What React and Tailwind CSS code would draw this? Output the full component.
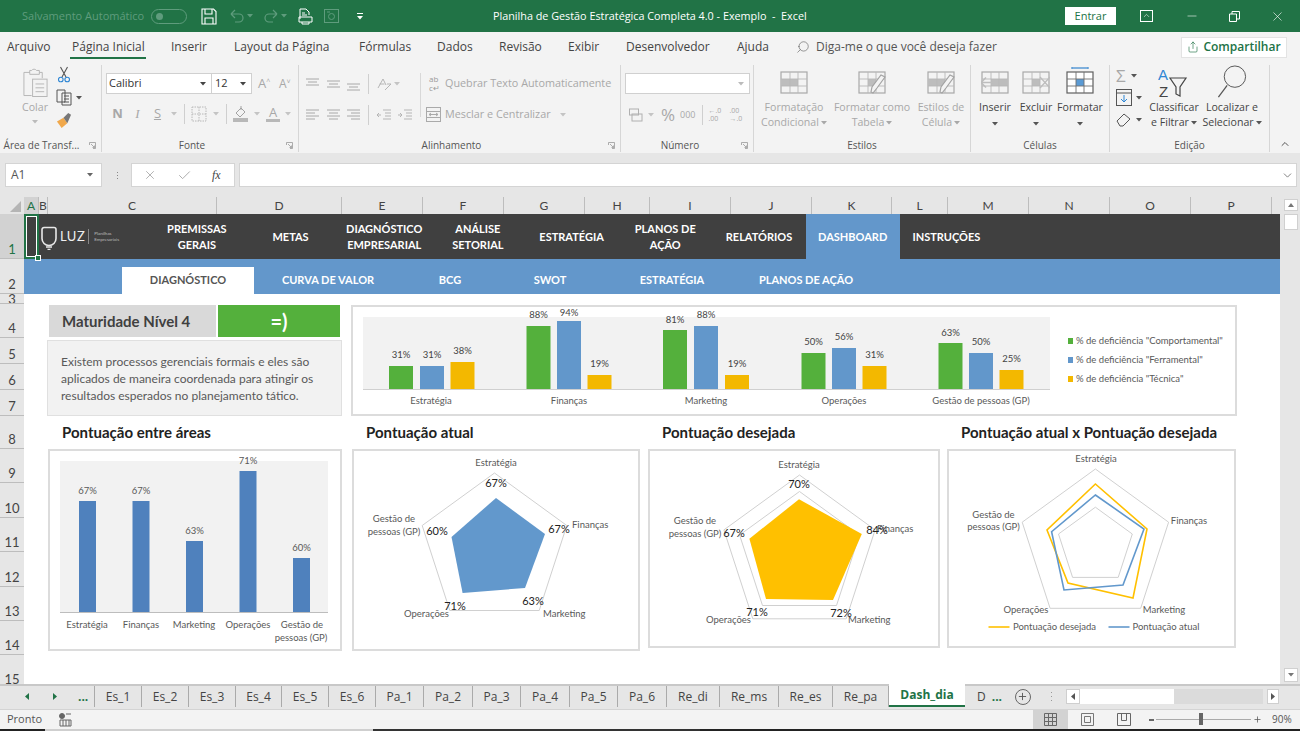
import React from "react";
import { Search, Share, X, Check, Minus, Plus, ChevronUp, ChevronDown } from "lucide-react";

const G = "#a8a8a8";
const Caret = ({ c = "#7a7a7a", className = "" }) => (
  <svg width="6" height="4" viewBox="0 0 6 4" className={className}><path d="M0 0h6L3 3.6z" fill={c} /></svg>
);

const Save = () => (
  <svg width="16" height="17" viewBox="0 0 16 17" fill="none" stroke="#fff" strokeWidth="1.1"><path d="M1 1h11.5L15 3.5V16H1z" /><path d="M4 1v5h7V1M4 16v-6h8v6" /></svg>
);
const Undo = ({ flip }) => (
  <svg width="14" height="14" viewBox="0 0 14 14" fill="none" stroke="#5f9c7d" strokeWidth="1.2" className={flip ? "-scale-x-100" : ""}><path d="M1 5h8a4 4 0 0 1 0 8H5M1 5l4-4M1 5l4 4" /></svg>
);
const Preview = () => (
  <svg width="15" height="17" viewBox="0 0 15 17" fill="none" stroke="#fff" strokeWidth="1"><path d="M2 11V1h6l3 3v3" /><path d="M4 5h3M4 7h5" /><path d="M1 9h13v5H1zM4 14v2h7v-2" /></svg>
);
const Camera = () => (
  <svg width="15" height="14" viewBox="0 0 15 14" fill="none" stroke="#5f9c7d" strokeWidth="1"><rect x="0.5" y="0.5" width="14" height="13" /><circle cx="7.5" cy="7.5" r="3" /><path d="M3 3h3" /></svg>
);
const Lines = ({ rows }) => (
  <svg width="17" height="16" viewBox="0 0 17 16" stroke={G} strokeWidth="1" fill="none">
    {rows.map((r, i) => <path key={i} d={`M${r[0]} ${r[2]}H${r[1]}`} />)}
  </svg>
);
const Grid = ({ hi, brush, arrow, del, top }) => (
  <svg width="28" height="32" viewBox="0 0 28 32" fill="none">
    {top && <path d="M6 2h16M6 1v2M22 1v2" stroke="#5b9bd5" strokeWidth="1.4" />}
    <rect x="1" y="6" width="26" height="21" fill={top ? "#fff" : "#f3f3f3"} stroke={top ? "#5f5f5f" : "#a9a9a9"} strokeWidth="1.2" />
    {hi && <rect x={hi[0]} y={hi[1]} width={hi[2]} height={hi[3]} fill={top ? "#5b9bd5" : "#bdbdbd"} />}
    <path d="M1 13h26M1 20h26M10 6v21M18 6v21" stroke={top ? "#6f6f6f" : "#b8b8b8"} strokeWidth="0.9" />
    {arrow && <path d="M0 16.5h12M0 16.5l5-5M0 16.5l5 5" stroke="#bdbdbd" strokeWidth="1.6" />}
    {del && <path d="M18 11l10 11M28 11L18 22" stroke="#bdbdbd" strokeWidth="1.3" />}
    {brush && <path d="M27 11l-8 11-4 5-2-1 1-5 9-12z" fill="#f3f3f3" stroke="#a3a3a3" strokeWidth="1.2" />}
  </svg>
);

const menu = [["Arquivo", "w-[65px]"], ["Página Inicial", "w-[99px]"], ["Inserir", "w-[63px]"], ["Layout da Página", "w-[125px]"], ["Fórmulas", "w-[78px]"], ["Dados", "w-[62px]"], ["Revisão", "w-[69px]"], ["Exibir", "w-[58px]"], ["Desenvolvedor", "w-[111px]"], ["Ajuda", "w-[59px]"]];

function TitleBar() {
  return (
    <div className="flex h-8 items-center bg-[#217346] text-[11px] text-white">
      <div className="flex w-[493px] items-center pl-[22px]">
        <span className="w-[129px] text-[#5f9c7d]">Salvamento Automático</span>
        <div className="flex h-[15px] w-9 items-center rounded-full border border-[#5f9c7d] pl-[4px]"><div className="h-[7px] w-[7px] rounded-full bg-[#5f9c7d]" /></div>
        <div className="ml-[14px]"><Save /></div>
        <div className="ml-[13px] flex items-center gap-[3px]"><Undo /><Caret c="#5f9c7d" /></div>
        <div className="ml-[11px] flex items-center gap-[3px]"><Undo flip /><Caret c="#5f9c7d" /></div>
        <div className="ml-[11px]"><Preview /></div>
        <div className="ml-[11px]"><Camera /></div>
        <div className="ml-[18px] flex flex-col items-center gap-[2px]"><div className="h-px w-[6px] bg-white" /><Caret c="#fff" /></div>
      </div>
      <span className="whitespace-pre text-[10.8px]">Planilha de Gestão Estratégica Completa 4.0 - Exemplo  -  Excel</span>
      <div className="ml-auto flex items-center text-white">
        <div className="flex h-[18px] w-[51px] items-center justify-center bg-white text-[#217346]">Entrar</div>
        <div className="ml-[24px] flex h-[12px] w-[13px] items-start justify-center border border-white"><ChevronUp size={9} strokeWidth={1.5} /></div>
        <Minus size={14} strokeWidth={1} className="ml-[32px]" />
        <svg width="11" height="11" viewBox="0 0 11 11" fill="none" stroke="#fff" className="ml-[30px]"><path d="M0.5 3h7v7.5h-7zM3 3V0.5h7.5V8H8" /></svg>
        <X size={15} strokeWidth={1} className="ml-[30px] mr-[15px]" />
      </div>
    </div>
  );
}

function Tabs() {
  return (
    <div className="flex h-[30px] items-center bg-[#f3f3f3] pl-[7px] text-[12px] text-[#444]">
      {menu.map(([t, w]) => (
        <div key={t} className={`relative flex h-full items-center ${w}`}>
          {t}
          {t === "Página Inicial" && <div className="absolute left-[-2px] top-[25px] h-[2px] w-[76px] bg-[#217346]" />}
        </div>
      ))}
      <Search size={14} strokeWidth={1} className="-scale-x-100 text-[#555]" />
      <span className="ml-[6px] w-[365px] text-[#555]">Diga-me o que você deseja fazer</span>
      <div className="flex h-[21px] w-[106px] items-center justify-center gap-[4px] border border-[#e3e3e3] bg-white font-semibold text-[#217346]">
        <Share size={12} strokeWidth={1.3} />Compartilhar
      </div>
    </div>
  );
}

const Group = ({ w, label, launcher, pad = "", children }) => (
  <div className={`mb-[1px] mt-[3px] flex shrink-0 flex-col ${w} border-r border-[#d6d6d6]`}>
    <div className="relative flex-1">{children}</div>
    <div className={`relative h-[14px] ${pad} text-center text-[10px] leading-[14px] text-[#555]`}>
      {label}
      {launcher && <svg width="7" height="7" viewBox="0 0 7 7" fill="none" stroke="#999" strokeWidth="0.8" className="absolute right-[5px] top-[4px]"><path d="M0.5 3V0.5H6.5V6.5H4M2 2l3.5 3.5M5.5 3.5v2h-2" /></svg>}
    </div>
  </div>
);

const SmallBtn = ({ children, w = "" }) => <div className={`flex items-center justify-center ${w}`}>{children}</div>;
const V = ({ m = "mx-[4px]" }) => <div className={`${m} h-[20px] w-px bg-[#cfcfcf]`} />;
const L = { top: [[2, 15, 3], [4, 13, 6], [2, 15, 9]], mid: [[2, 15, 5], [4, 13, 8], [2, 15, 11]], bot: [[2, 15, 8], [4, 13, 11], [2, 15, 14]], left: [[2, 15, 3], [2, 11, 6], [2, 15, 9], [2, 11, 12]], center: [[2, 15, 3], [4, 13, 6], [2, 15, 9], [4, 13, 12]], right: [[2, 15, 3], [6, 15, 6], [2, 15, 9], [6, 15, 12]] };

const BigBtn = ({ icon, a, b, w, dark, caret }) => (
  <div className={`flex shrink-0 flex-col items-center ${w} ${dark ? "text-[#444]" : "text-[#a8a8a8]"}`}>
    <div className="flex h-[33px] items-end">{icon}</div>
    <div className="mt-[2px] h-[15px] whitespace-nowrap text-[10.6px] leading-[15px]">{a}</div>
    <div className="flex h-[15px] items-center gap-[2px] whitespace-nowrap text-[10.6px] leading-[15px]">{b}{caret && <Caret c={dark ? "#555" : G} />}</div>
  </div>
);

function Ribbon() {
  return (
    <div className="flex h-[91px] items-stretch bg-[#f3f3f3] text-[#a8a8a8] shadow-[0_2px_2px_#cfcfcf]">
      <Group w="w-[102px]" label="Área de Transf..." launcher pad="pr-[18px]">
        <div className="flex pl-[20px]">
          <div className="flex w-[30px] flex-col items-center pt-[3px]">
            <svg width="27" height="30" viewBox="0 0 28 30" fill="none" stroke="#b5b5b5"><path d="M8 4H2v24h8M18 4h3v6" /><path d="M8 5V2h2a3 3 0 0 1 5 0h3v4H8z" /><rect x="11" y="11" width="15" height="18" /><path d="M14 16h9M14 20h9M14 24h9" /></svg>
            <span className="mt-[2px] text-[10.6px] leading-[15px]">Colar</span>
            <Caret c="#bbb" className="mt-[5px]" />
          </div>
          <div className="ml-[6px] flex flex-col items-start gap-[6px] pt-[1px]">
            <svg width="14" height="17" viewBox="0 0 14 17" fill="none" className="ml-[1px]"><path d="M3.5 1l5.5 10M10.5 1L5 11" stroke="#555" strokeWidth="1.1" /><circle cx="3.8" cy="13.5" r="2.3" stroke="#2e86d4" strokeWidth="1.1" /><circle cx="10.2" cy="13.5" r="2.3" stroke="#2e86d4" strokeWidth="1.1" /></svg>
            <div className="flex items-center gap-[4px]">
              <svg width="16" height="17" viewBox="0 0 16 17" fill="none" stroke="#555"><path d="M1 1h8v12H1zM6 4h9v12H6z" fill="#f3f3f3" /><path d="M8 7h5M8 10h5M8 13h5" /></svg>
              <Caret c="#555" />
            </div>
            <svg width="16" height="17" viewBox="0 0 17 18"><path d="M1 10l7-4 4 6-6 5z" fill="#f0a84b" /><path d="M8 6l5-5 3 2-4 9z" fill="#777" /></svg>
          </div>
        </div>
      </Group>
      <Group w="w-[197px]" label="Fonte" launcher pad="pr-[16px]">
        <div className="mt-[8px] flex h-[21px] items-center pl-[4px]">
          <div className="flex h-[21px] w-[106px] items-center justify-between border border-[#d0d0d0] bg-white px-[2px] pr-[5px] text-[11px] text-[#333]">Calibri<Caret c="#444" /></div>
          <div className="flex h-[21px] w-[40px] items-center justify-between border border-l-0 border-[#d0d0d0] bg-white px-[3px] pr-[5px] text-[11px] text-[#333]">12<Caret c="#444" /></div>
          <span className="ml-[6px] w-[21px] text-[13px]">A<sup className="text-[7px]">^</sup></span>
          <span className="text-[12px]">A<sup className="text-[7px]">˅</sup></span>
        </div>
        <div className="mt-[9px] flex h-[22px] items-center pl-[6px] text-[13px]">
          <SmallBtn w="w-[19px]"><b>N</b></SmallBtn>
          <SmallBtn w="w-[21px]"><i className="font-['Liberation_Serif',serif]">I</i></SmallBtn>
          <SmallBtn w="w-[19px]"><u>S</u></SmallBtn>
          <Caret c="#c4c4c4" className="ml-[4px]" /><V m="ml-[7px] mr-[6px]" />
          <svg width="16" height="16" viewBox="0 0 16 16" fill="none" stroke="#b8b8b8" strokeDasharray="1.5 1"><rect x="1" y="1" width="14" height="14" /><path d="M1 8h14M8 1v14" /></svg>
          <Caret c="#c4c4c4" className="ml-[6px]" /><V m="ml-[7px] mr-[6px]" />
          <svg width="16" height="18" viewBox="0 0 16 18" fill="none" stroke="#a3a3a3"><path d="M3 8l5-5 4 4-5 5z" /><path d="M8 1v4" /><rect x="0" y="13" width="15" height="4" fill="#b8b8b8" stroke="none" /></svg>
          <Caret c="#c4c4c4" className="ml-[5px] mr-[6px]" />
          <div className="flex flex-col items-center leading-[13px]"><span>A</span><div className="h-[3px] w-[14px] bg-[#b8b8b8]" /></div>
          <Caret c="#c4c4c4" className="ml-[5px]" />
        </div>
      </Group>
      <Group w="w-[322px]" label="Alinhamento" launcher pad="pr-[16px]">
        <div className="mt-[7px] flex h-[23px] items-center pl-[5px]">
          <div className="flex w-[58px] justify-between"><Lines rows={L.top} /><Lines rows={L.mid} /><Lines rows={L.bot} /></div>
          <V m="ml-[6px] mr-0" />
          <svg width="16" height="16" viewBox="0 0 16 16" fill="none" stroke="#b5b5b5" className="ml-[7px]"><path d="M2 12l5-9 3 6M3.5 8h5M9 14l6-6M15 8h-4" /></svg>
          <Caret c="#c4c4c4" className="ml-[2px]" />
          <div className="ml-[20px] h-[44px] w-px translate-y-[11px] bg-[#d8d8d8]" />
          <div className="ml-[8px] flex h-[20px] w-[16px] flex-col text-[8px] leading-[9px] text-[#9a9a9a]"><span>ab</span><span>c↵</span></div>
          <span className="text-[10.8px]">Quebrar Texto Automaticamente</span>
        </div>
        <div className="mt-[8px] flex h-[23px] items-center pl-[5px]">
          <div className="flex w-[58px] justify-between"><Lines rows={L.left} /><Lines rows={L.center} /><Lines rows={L.right} /></div>
          <V m="ml-[6px] mr-0" />
          <svg width="15" height="14" viewBox="0 0 15 14" fill="none" stroke="#b5b5b5" className="ml-[8px]"><path d="M6 2h8M8 5h6M8 8h6M6 11h8M0 7h4M0 7l2-2M0 7l2 2" /></svg>
          <svg width="15" height="14" viewBox="0 0 15 14" fill="none" stroke="#b5b5b5" className="ml-[6px]"><path d="M6 2h8M8 5h6M8 8h6M6 11h8M0 7h4M4 7L2 5M4 7L2 9" /></svg>
          <svg width="15" height="15" viewBox="0 0 15 15" fill="none" stroke="#aaa" className="ml-[13px]"><rect x="0.5" y="0.5" width="14" height="14" /><path d="M0.5 4.5h14M0.5 10.5h14M3 7.5h9M3 7.5l2-1.5M3 7.5l2 1.5M12 7.5l-2-1.5M12 7.5l-2 1.5" /></svg>
          <span className="ml-[4px] text-[10.8px]">Mesclar e Centralizar</span>
          <Caret c="#c4c4c4" className="ml-[9px]" />
        </div>
      </Group>
      <Group w="w-[133px]" label="Número" launcher pad="pr-[14px]">
        <div className="ml-[4px] mt-[8px] flex h-[21px] w-[125px] items-center justify-end border border-[#d0d0d0] bg-white pr-[5px]"><Caret c="#bbb" /></div>
        <div className="mt-[9px] flex h-[24px] items-center pl-[8px]">
          <svg width="14" height="14" viewBox="0 0 14 14" fill="none" stroke="#b0b0b0"><rect x="0.5" y="1" width="9" height="6" /><rect x="3" y="6" width="10" height="7" /></svg>
          <Caret c="#c4c4c4" className="ml-[5px]" />
          <span className="ml-[7px] text-[17px]">%</span>
          <span className="ml-[5px] text-[9px]">000</span>
          <V m="ml-[6px] mr-[6px]" />
          <span className="flex w-[21px] flex-col text-[7px] leading-[8px]"><span>←.0</span><span>.00</span></span>
          <span className="flex w-[20px] flex-col text-[7px] leading-[8px]"><span>.00</span><span>→.0</span></span>
        </div>
      </Group>
      <Group w="w-[217px]" label="Estilos">
        <div className="flex pl-[1px]">
          <BigBtn w="w-[78px]" a="Formatação" b="Condicional" caret icon={<Grid hi={[1, 13, 17, 7]} />} />
          <BigBtn w="w-[78px]" a="Formatar como" b="Tabela" caret icon={<Grid hi={[10, 13, 8, 7]} brush />} />
          <BigBtn w="w-[60px]" a="Estilos de" b="Célula" caret icon={<Grid hi={[1, 13, 17, 7]} brush />} />
        </div>
      </Group>
      <Group w="w-[139px]" label="Células">
        <div className="flex pl-[2px]">
          <BigBtn dark w="w-[44px]" a="Inserir" b={<Caret c="#555" className="mt-[3px]" />} icon={<Grid hi={[10, 13, 17, 7]} arrow />} />
          <BigBtn dark w="w-[38px]" a="Excluir" b={<Caret c="#555" className="mt-[3px]" />} icon={<Grid hi={[10, 13, 8, 7]} del />} />
          <BigBtn dark w="w-[50px]" a="Formatar" b={<Caret c="#555" className="mt-[3px]" />} icon={<Grid hi={[10, 13, 8, 7]} top />} />
        </div>
      </Group>
      <Group w="w-[160px]" label="Edição">
        <div className="flex pl-[6px] text-[#444]">
          <div className="flex w-[28px] shrink-0 flex-col items-start gap-[5px] pt-[2px]">
            <div className="flex h-[17px] items-center gap-[5px]"><span className="text-[17px] leading-[17px] text-[#a8a8a8]">Σ</span><Caret c="#555" /></div>
            <div className="flex h-[17px] items-center gap-[4px]"><svg width="16" height="17" viewBox="0 0 16 17" fill="none"><rect x="0.5" y="0.5" width="15" height="16" stroke="#555" /><path d="M0.5 4h15" stroke="#555" /><path d="M8 6v7M5 10l3 3 3-3" stroke="#2e86d4" /></svg><Caret c="#555" /></div>
            <div className="flex h-[17px] items-center gap-[4px]"><svg width="16" height="14" viewBox="0 0 16 14" fill="none" stroke="#555"><path d="M1 8l7-7 6 5-7 7H4z" /></svg><Caret c="#555" /></div>
          </div>
          <BigBtn dark w="w-[60px]" a="Classificar" b="e Filtrar" caret icon={
            <svg width="32" height="33" viewBox="0 0 32 33" fill="none" className="font-['Liberation_Sans',sans-serif]"><text x="0" y="15" fontSize="15" fill="#2e86d4">A</text><text x="1" y="32" fontSize="15" fill="#444">Z</text><path d="M12 13h16l-6 9v9l-4-2v-7z" stroke="#444" strokeWidth="1.2" /></svg>
          } />
          <BigBtn dark w="w-[56px]" a="Localizar e" b="Selecionar" caret icon={
            <svg width="30" height="33" viewBox="0 0 30 34" fill="none" stroke="#555" strokeWidth="1"><circle cx="18" cy="12" r="11" /><path d="M10 21L1 33" strokeWidth="1.3" /></svg>
          } />
        </div>
      </Group>
      <div className="flex flex-1 items-end justify-center pb-[3px]"><ChevronUp size={12} strokeWidth={2} className="text-[#555]" /></div>
    </div>
  );
}

function FormulaBar() {
  return (
    <div className="flex h-[44px] items-start bg-[#e6e6e6] pl-[5px] pt-[10px] text-[#555]">
      <div className="flex h-[24px] w-[97px] items-center justify-between border border-[#d4d4d4] bg-white pl-[5px] pr-[8px] text-[12px]">A1<Caret c="#666" /></div>
      <div className="ml-[13px] flex h-[24px] w-[4px] flex-col items-center justify-center gap-[2px]"><div className="h-px w-px bg-[#888]" /><div className="h-px w-px bg-[#888]" /><div className="h-px w-px bg-[#888]" /></div>
      <div className="ml-[12px] flex h-[24px] w-[104px] items-center border border-[#d4d4d4] bg-white">
        <X size={14} strokeWidth={1.5} className="ml-[11px] text-[#a8a8a8]" />
        <Check size={15} strokeWidth={1.5} className="ml-[20px] text-[#a8a8a8]" />
        <span className="ml-[20px] font-['Liberation_Serif',serif] text-[12px] italic text-[#444]">fx</span>
      </div>
      <div className="ml-[4px] flex h-[24px] w-[1058px] items-center justify-end border border-[#d4d4d4] bg-white pr-[2px]"><ChevronDown size={13} strokeWidth={1.5} className="text-[#666]" /></div>
    </div>
  );
}

const columns = [["A", "w-[15px]"], ["B", "w-[9px]"], ["C", "w-[169px]"], ["D", "w-[125px]"], ["E", "w-[81px]"], ["F", "w-[81px]"], ["G", "w-[81px]"], ["H", "w-[65px]"], ["I", "w-[81px]"], ["J", "w-[81px]"], ["K", "w-[80px]"], ["L", "w-[56px]"], ["M", "w-[81px]"], ["N", "w-[81px]"], ["O", "w-[81px]"], ["P", "w-[81px]"]];

function ColHeaders() {
  return (
    <div className="flex h-[17px] bg-[#e6e6e6] font-['Lato',sans-serif] text-[12px] text-[#444]">
      <div className="relative w-[24px] shrink-0">
        <svg width="24" height="17" viewBox="0 0 24 17"><path d="M21 4v11H10z" fill="#b5b5b5" /></svg>
      </div>
      {columns.map(([c, w]) => (
        <div key={c} className={`flex ${w} shrink-0 items-center justify-center border-r border-[#bdbdbd] ${c === "A" ? "bg-[#d2d2d2] text-[#217346]" : ""}`}>{c}</div>
      ))}
    </div>
  );
}

const rows = [["1", "h-[45px]"], ["2", "h-[35px]"], ["3", "h-[10px]"], ["4", "h-[34px]"], ["5", "h-[26px]"], ["6", "h-[26px]"], ["7", "h-[26px]"], ["8", "h-[33px]"], ["9", "h-[34px]"], ["10", "h-[35px]"], ["11", "h-[34px]"], ["12", "h-[35px]"], ["13", "h-[34px]"], ["14", "h-[34px]"], ["15", "h-[34px]"]];

function RowHeaders() {
  return (
    <div className="w-[24px] shrink-0 bg-[#e6e6e6] font-['Lato',sans-serif] text-[13px] text-[#444]">
      {rows.map(([r, h]) => (
        <div key={r} className={`flex ${h} justify-center overflow-hidden border-b border-[#bdbdbd] ${r === "3" ? "items-center leading-[10px]" : "items-end leading-[18px]"} ${r === "1" ? "bg-[#d2d2d2] text-[#217346]" : ""}`}>{r}</div>
      ))}
    </div>
  );
}

const Nav = ({ a, b, active }) => (
  <div className={`flex h-full w-[93.7px] shrink-0 flex-col items-center justify-center text-center text-[11px] font-bold leading-[15.5px] ${active ? "bg-[#6397cb]" : ""}`}>
    <span>{a}</span>{b && <span>{b}</span>}
  </div>
);

const Sub = ({ t, w, active }) => (
  <div className={`flex h-[27px] ${w} shrink-0 items-center justify-center text-[11px] font-bold ${active ? "bg-white text-[#555]" : "text-white"}`}>{t}</div>
);

const Lbl = ({ x, y, t, a = "middle", c = "#595959", s = 9.5 }) => <text x={x} y={y} textAnchor={a} fill={c} fontSize={s}>{t}</text>;

function TopChart() {
  const green = "#54b03c", blue = "#6297cb", yellow = "#f3b800";
  const data = [
    [[389, 366, "31%", green, 358], [420, 366, "31%", blue, 358], [450.5, 362, "38%", yellow, 354]],
    [[526.5, 326, "88%", green, 318], [557, 321, "94%", blue, 316], [587.5, 375, "19%", yellow, 367]],
    [[663, 330, "81%", green, 323], [694, 326, "88%", blue, 318], [725, 375, "19%", yellow, 367]],
    [[801.5, 353, "50%", green, 345], [832, 348, "56%", blue, 340], [862.5, 366, "31%", yellow, 358]],
    [[938.5, 343, "63%", green, 336], [969, 353, "50%", blue, 345], [999.5, 370, "25%", yellow, 362]],
  ];
  const cats = [[431, "Estratégia"], [569, "Finanças"], [706, "Marketing"], [844, "Operações"], [981, "Gestão de pessoas (GP)"]];
  const leg = [[341, green, '% de deficiência "Comportamental"'], [360, blue, '% de deficiência "Ferramental"'], [379, yellow, '% de deficiência "Técnica"']];
  return (
    <svg viewBox="353 307 882 107" className="block h-full w-full">
      <rect x="363" y="317" width="687" height="72" fill="#f2f2f2" />
      <path d="M363 389.5h687" stroke="#d0d0d0" />
      {data.flat().map(([x, top, v, c, ly], i) => (
        <g key={i}>
          <rect x={x} y={top} width="24" height={389 - top} fill={c} />
          <Lbl x={x + 12} y={ly} t={v} s={9.5} c="#444" />
        </g>
      ))}
      {cats.map(([x, t]) => <Lbl key={t} x={x} y={404} t={t} />)}
      {leg.map(([y, c, t]) => (
        <g key={t}>
          <rect x="1068" y={y - 3} width="5" height="6" fill={c} />
          <Lbl x={1076} y={y + 3} t={t} a="start" />
        </g>
      ))}
    </svg>
  );
}

function AreasChart() {
  const bars = [[79, 501, "67%"], [132.5, 501, "67%"], [186, 541, "63%"], [239.5, 471, "71%"], [293, 558, "60%"]];
  return (
    <svg viewBox="50 451 290 198" className="block h-full w-full overflow-visible">
      <rect x="60" y="461" width="268" height="151" fill="#f2f2f2" />
      <path d="M60 612.5h268" stroke="#bdbdbd" />
      {bars.map(([x, top, v], i) => (
        <g key={i}>
          <rect x={x} y={top} width="17" height={612 - top} fill="#4f81bd" />
          <Lbl x={x + 8.5} y={top - 7} t={v} />
        </g>
      ))}
      <Lbl x={87} y={628} t="Estratégia" />
      <Lbl x={141} y={628} t="Finanças" />
      <Lbl x={194} y={628} t="Marketing" />
      <Lbl x={248} y={628} t="Operações" />
      <Lbl x={302} y={628} t="Gestão de" />
      <Lbl x={301} y={641} t="pessoas (GP)" />
    </svg>
  );
}

const pent = (cx, cy, R) => [0, 1, 2, 3, 4].map((i) => {
  const a = (-90 + 72 * i) * Math.PI / 180;
  return `${(cx + R * Math.cos(a)).toFixed(1)},${(cy + R * Math.sin(a)).toFixed(1)}`;
}).join(" ");

function RadarAtual() {
  return (
    <svg viewBox="354 451 284 198" className="block h-full w-full">
      <polygon points={pent(494.5, 549, 76)} fill="none" stroke="#d0d0d0" />
      <polygon points="496,498 545,534 525,588 462.6,593 451.5,537" fill="#6298cc" />
      <Lbl x={496} y={466} t="Estratégia" />
      <Lbl x={572} y={528} t="Finanças" a="start" />
      <Lbl x={543} y={617} t="Marketing" a="start" />
      <Lbl x={404} y={617} t="Operações" a="start" />
      <Lbl x={394} y={522} t="Gestão de" />
      <Lbl x={394} y={535} t="pessoas (GP)" />
      <Lbl x={496} y={487} t="67%" c="#222" s={11} />
      <Lbl x={559} y={533} t="67%" c="#222" s={11} />
      <Lbl x={533} y={605} t="63%" c="#222" s={11} />
      <Lbl x={455} y={610} t="71%" c="#222" s={11} />
      <Lbl x={437} y={535} t="60%" c="#222" s={11} />
    </svg>
  );
}

function RadarDesejada() {
  return (
    <svg viewBox="650 451 288 195" className="block h-full w-full">
      <polygon points={pent(799.5, 554.5, 79.5)} fill="none" stroke="#d0d0d0" />
      <polygon points={pent(799.5, 554.5, 63)} fill="none" stroke="#d0d0d0" />
      <polygon points="799,499.3 861.8,534 833,600 766,599 749.4,538.7" fill="#ffc000" />
      <Lbl x={799} y={468} t="Estratégia" />
      <Lbl x={877} y={532} t="Finanças" a="start" />
      <Lbl x={848} y={623} t="Marketing" a="start" />
      <Lbl x={706} y={623} t="Operações" a="start" />
      <Lbl x={695} y={524} t="Gestão de" />
      <Lbl x={695} y={537} t="pessoas (GP)" />
      <Lbl x={799} y={488} t="70%" c="#222" s={11} />
      <Lbl x={877} y={534} t="84%" c="#222" s={11} />
      <Lbl x={841} y={617} t="72%" c="#222" s={11} />
      <Lbl x={757} y={616} t="71%" c="#222" s={11} />
      <Lbl x={734} y={537} t="67%" c="#222" s={11} />
    </svg>
  );
}

function RadarCompare() {
  return (
    <svg viewBox="949 451 285 195" className="block h-full w-full">
      <polygon points={pent(1095.4, 546, 77)} fill="none" stroke="#d0d0d0" />
      <polygon points={pent(1095.4, 546, 38.8)} fill="none" stroke="#d0d0d0" />
      <polygon points="1095.4,484 1147,529 1133,598 1068,583 1047,530" fill="none" stroke="#ffc000" strokeWidth="1.6" />
      <polygon points="1095.4,495 1144,529 1123,585 1064,590 1051.6,531.7" fill="none" stroke="#6298cc" strokeWidth="1.6" />
      <Lbl x={1096} y={462} t="Estratégia" />
      <Lbl x={1189} y={524} t="Finanças" />
      <Lbl x={1164} y={613} t="Marketing" />
      <Lbl x={1026} y={613} t="Operações" />
      <Lbl x={993.5} y={518} t="Gestão de" />
      <Lbl x={993.5} y={530} t="pessoas (GP)" />
      <path d="M988.5 627h21" stroke="#ffc000" strokeWidth="1.6" />
      <Lbl x={1013} y={630} t="Pontuação desejada" a="start" />
      <path d="M1108.5 627h21" stroke="#6298cc" strokeWidth="1.6" />
      <Lbl x={1132.5} y={630} t="Pontuação atual" a="start" />
    </svg>
  );
}

const Title = ({ t, pl }) => <div className={`flex h-[33px] items-center ${pl} text-[15px] font-bold text-[#222]`}>{t}</div>;
const Card = ({ w, h, children }) => <div className={`${w} ${h} border-2 border-[#dcdcdc] bg-white`}>{children}</div>;

function Sheet() {
  return (
    <div className="relative w-[1256px] font-['Lato',sans-serif]">
      <div className="flex h-[45px] bg-[#404040] text-white">
        <div className="flex w-[126px] shrink-0 items-center pl-[17px]">
          <svg width="16" height="26" viewBox="0 0 16 26" fill="none" stroke="#e8e8e8" strokeWidth="1.6"><path d="M3 3.5h10a2 2 0 0 1 2 2v9a7 7 0 0 1-14 0v-9a2 2 0 0 1 2-2z" /><path d="M5 23h6M6.5 25.5h3" /></svg>
          <span className="ml-[3px] text-[13px] tracking-[0.5px] text-[#eee]">LUZ</span>
          <div className="ml-[3px] h-[15px] w-px bg-[#888]" />
          <div className="ml-[5px] flex flex-col text-[4.5px] leading-[6px] text-[#bbb]"><span>Planilhas</span><span>Empresariais</span></div>
        </div>
        <Nav a="PREMISSAS" b="GERAIS" />
        <Nav a="METAS" />
        <Nav a="DIAGNÓSTICO" b="EMPRESARIAL" />
        <Nav a="ANÁLISE" b="SETORIAL" />
        <Nav a="ESTRATÉGIA" />
        <Nav a="PLANOS DE" b="AÇÃO" />
        <Nav a="RELATÓRIOS" />
        <Nav a="DASHBOARD" active />
        <Nav a="INSTRUÇÕES" />
      </div>
      <div className="flex h-[35px] items-end bg-[#6397cb] pl-[98px]">
        <Sub t="DIAGNÓSTICO" w="w-[132px]" active />
        <Sub t="CURVA DE VALOR" w="w-[148px]" />
        <Sub t="BCG" w="w-[96px]" />
        <Sub t="SWOT" w="w-[104px]" />
        <Sub t="ESTRATÉGIA" w="w-[140px]" />
        <Sub t="PLANOS DE AÇÃO" w="w-[128px]" />
      </div>
      <div className="h-[390px] bg-white pl-[23px] pt-[11px]">
        <div className="flex items-start">
          <div className="w-[295px] shrink-0">
            <div className="flex pl-[2px]">
              <div className="flex h-[32px] w-[167px] items-center bg-[#d9d9d9] pl-[13px] text-[15px] font-bold text-[#404040]">Maturidade Nível 4</div>
              <div className="ml-[2px] flex h-[32px] w-[122px] items-center justify-center bg-[#54b03c] text-[20px] font-bold text-white">=)</div>
            </div>
            <div className="mt-[3px] flex h-[76px] flex-col justify-center border border-[#e0e0e0] bg-[#f2f2f2] pl-[13px] text-[12px] leading-[17px] text-[#595959]">
              <span>Existem processos gerenciais formais e eles são</span>
              <span>aplicados de maneira coordenada para atingir os</span>
              <span>resultados esperados no planejamento tático.</span>
            </div>
          </div>
          <div className="ml-[9px]"><Card w="w-[886px]" h="h-[111px]"><TopChart /></Card></div>
        </div>
        <div className="flex items-start">
          <div className="w-[304px] shrink-0"><Title t="Pontuação entre áreas" pl="pl-[15px]" /><div className="pl-px"><Card w="w-[294px]" h="h-[202px]"><AreasChart /></Card></div></div>
          <div className="w-[297px] shrink-0"><Title t="Pontuação atual" pl="pl-[15px]" /><div className="pl-px"><Card w="w-[288px]" h="h-[202px]"><RadarAtual /></Card></div></div>
          <div className="w-[299px] shrink-0"><Title t="Pontuação desejada" pl="pl-[14px]" /><Card w="w-[292px]" h="h-[199px]"><RadarDesejada /></Card></div>
          <div className="w-[289px] shrink-0"><Title t="Pontuação atual x Pontuação desejada" pl="pl-[14px]" /><Card w="w-[289px]" h="h-[199px]"><RadarCompare /></Card></div>
        </div>
      </div>
      <div className="absolute left-0 top-0 h-[45px] w-[15px] border-2 border-[#217346]">
        <div className="h-full w-full border border-white" />
        <div className="absolute bottom-[-4px] right-[-4px] h-[6px] w-[6px] border border-white bg-[#217346]" />
      </div>
    </div>
  );
}

function VScroll() {
  return (
    <div className="flex w-[20px] shrink-0 flex-col items-center bg-[#e6e6e6] pl-[4px] pr-[2px] pt-[2px]">
      <div className="flex h-[12px] w-[14px] items-center justify-center border border-[#d0d0d0] bg-white"><svg width="6" height="4" viewBox="0 0 6 4"><path d="M0 4h6L3 0z" fill="#777" /></svg></div>
      <div className="mt-[3px] h-[16px] w-[14px] border border-[#d0d0d0] bg-white" />
      <div className="mb-[2px] mt-auto flex h-[14px] w-[14px] items-center justify-center border border-[#d0d0d0] bg-white"><Caret c="#777" /></div>
    </div>
  );
}

const sheetTabs = [["Es_1", "w-[47px]"], ["Es_2", "w-[47px]"], ["Es_3", "w-[47px]"], ["Es_4", "w-[46px]"], ["Es_5", "w-[47px]"], ["Es_6", "w-[47px]"], ["Pa_1", "w-[48px]"], ["Pa_2", "w-[49px]"], ["Pa_3", "w-[48px]"], ["Pa_4", "w-[49px]"], ["Pa_5", "w-[48px]"], ["Pa_6", "w-[49px]"], ["Re_di", "w-[53px]"], ["Re_ms", "w-[59px]"], ["Re_es", "w-[54px]"], ["Re_pa", "w-[56px]"]];

function SheetTabs() {
  return (
    <div className="flex h-[25px] items-stretch border-t-2 border-[#c8c8c8] bg-[#e6e6e6] pb-[2px] text-[12px] text-[#444]">
      <div className="flex w-[95px] shrink-0 items-center border-r border-[#aaa] pl-[25px]">
        <svg width="4" height="7" viewBox="0 0 4 7"><path d="M4 0v7L0 3.5z" fill="#217346" /></svg>
        <svg width="4" height="7" viewBox="0 0 4 7" className="ml-[24px]"><path d="M0 0v7l4-3.5z" fill="#217346" /></svg>
        <span className="ml-[21px] text-[12px] font-bold leading-[12px] text-[#217346]">...</span>
      </div>
      {sheetTabs.map(([t, w]) => (
        <div key={t} className={`flex ${w} shrink-0 items-center justify-center border-r border-[#aaa]`}>{t}</div>
      ))}
      <div className="-mt-[2px] flex w-[76px] shrink-0 items-center justify-center border-b-2 border-[#217346] bg-white font-bold text-[#217346]">Dash_dia</div>
      <div className="ml-[12px] flex items-center">D<span className="ml-[6px] font-bold text-[#217346]">...</span></div>
      <div className="ml-[13px] flex items-center"><div className="flex h-[16px] w-[16px] items-center justify-center rounded-full border border-[#666]"><Plus size={11} strokeWidth={2} className="text-[#555]" /></div></div>
      <div className="ml-[20px] flex w-[2px] flex-col items-center justify-center gap-[3px]"><div className="h-px w-px bg-[#999]" /><div className="h-px w-px bg-[#999]" /><div className="h-px w-px bg-[#999]" /></div>
      <div className="ml-[13px] flex items-center">
        <div className="flex h-[15px] w-[14px] items-center justify-center border border-[#cfcfcf] bg-white"><svg width="4" height="7" viewBox="0 0 4 7"><path d="M4 0v7L0 3.5z" fill="#555" /></svg></div>
        <div className="flex h-[15px] w-[94px] bg-white" />
        <div className="h-[15px] w-[89px] bg-[#dbdbdb]" />
        <div className="ml-[4px] flex h-[15px] w-[12px] items-center justify-center border border-[#cfcfcf] bg-white"><svg width="4" height="7" viewBox="0 0 4 7"><path d="M0 0v7l4-3.5z" fill="#555" /></svg></div>
      </div>
    </div>
  );
}

function StatusBar() {
  return (
    <div className="flex h-[20px] items-center border-t border-[#d4d4d4] bg-[#f3f3f3] pl-[7px] text-[11px] text-[#555]">
      <span className="w-[52px]">Pronto</span>
      <svg width="13" height="14" viewBox="0 0 13 14" fill="none" stroke="#666"><circle cx="3" cy="3" r="2.5" fill="#666" /><path d="M7 1h5M1 7h11v6H1zM4 7v6M7 7v6M10 7v6" /></svg>
      <div className="ml-auto flex h-full items-center">
        <div className="flex h-full w-[35px] items-center justify-center bg-[#d2d2d2]">
          <svg width="13" height="13" viewBox="0 0 13 13" fill="none" stroke="#666"><path d="M0.5 0.5h12v12h-12zM4.5 0.5v12M8.5 0.5v12M0.5 4.5h12M0.5 8.5h12" /></svg>
        </div>
        <svg width="13" height="13" viewBox="0 0 13 13" fill="none" stroke="#777" className="ml-[13px]"><path d="M0.5 0.5h12v12h-12zM3.5 3.5h6v6h-6z" /></svg>
        <svg width="14" height="13" viewBox="0 0 14 13" fill="none" stroke="#666" className="ml-[23px]"><path d="M0.5 0.5h13v12h-13zM4.5 0.5v7h5v-7" /></svg>
        <div className="ml-[18px] h-[2px] w-[5px] bg-[#666]" />
        <div className="relative ml-[2px] h-px w-[95px] bg-[#aaa]">
          <div className="absolute left-[43px] top-[-6px] h-[12px] w-[4px] bg-[#666]" />
        </div>
        <Plus size={9} strokeWidth={2} className="ml-[2px] text-[#555]" />
        <span className="ml-[10px] mr-[6px] w-[22px] text-[10px]">90%</span>
      </div>
    </div>
  );
}

export default function App() {
  return (
    <div className="h-[731px] w-[1300px] overflow-hidden bg-[#f3f3f3] font-['Open_Sans',sans-serif]">
      <TitleBar />
      <Tabs />
      <Ribbon />
      <FormulaBar />
      <div className="flex">
        <div className="w-[1280px] shrink-0">
          <ColHeaders />
          <div className="flex h-[470px] overflow-hidden">
            <RowHeaders />
            <Sheet />
          </div>
        </div>
        <VScroll />
      </div>
      <SheetTabs />
      <StatusBar />
      <div className="flex h-[2px]">
        <div className="w-[45px] bg-[#222]" />
        <div className="w-[328px] bg-[#cfcfcf]" />
        <div className="w-[327px] bg-[#333]" />
        <div className="flex-1 bg-[#222]" />
      </div>
    </div>
  );
}
